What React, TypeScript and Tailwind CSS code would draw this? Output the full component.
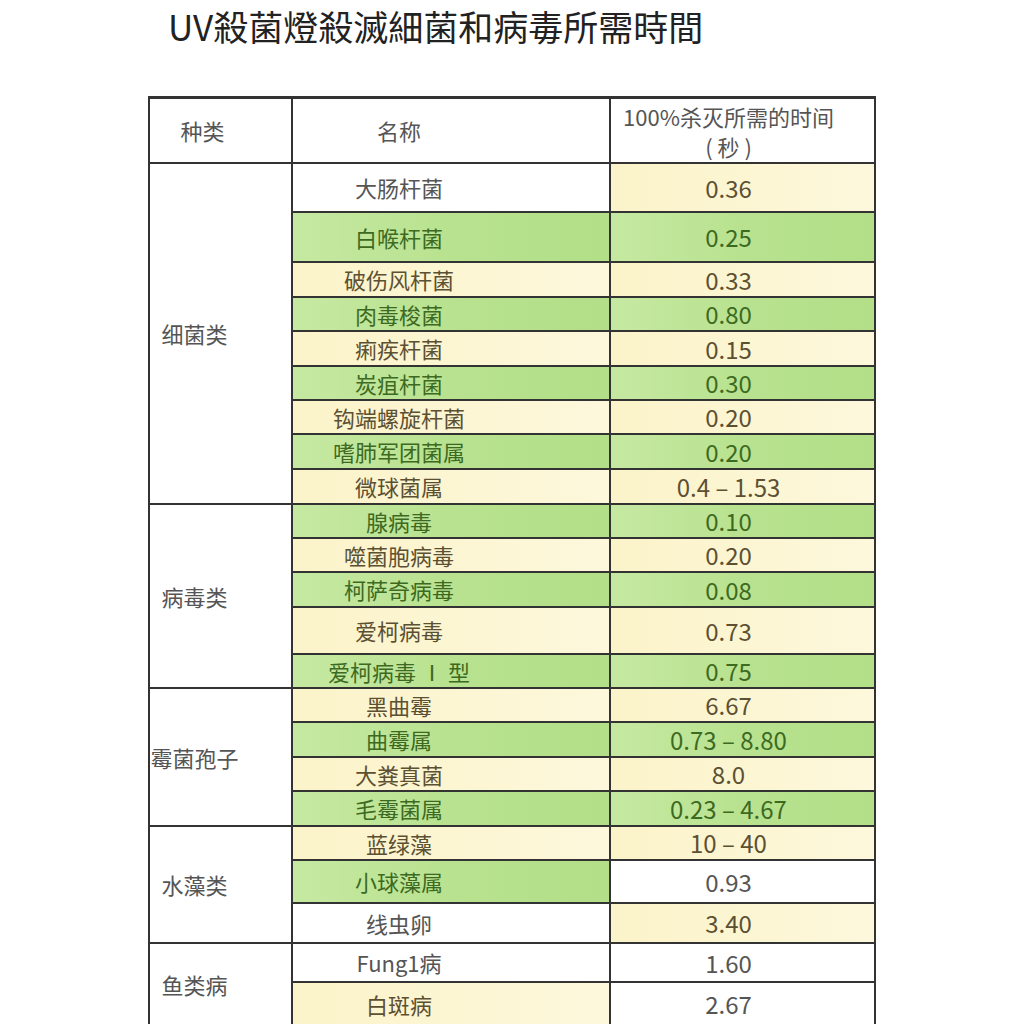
import React from 'react';

type Tone = 'w' | 'y' | 'g';

type Row = {
  name: string;
  time: string;
  h: string;
  nameTone: Tone;
  timeTone: Tone;
};

type Group = { label: string; rows: Row[] };

const TONE: Record<Tone, string> = {
  w: 'bg-white text-[#555]',
  y: 'bg-gradient-to-r from-[#fbf3c9] to-[#fdf8dc] text-[#5c5033]',
  g: 'bg-gradient-to-r from-[#c6e9a2] via-[#b8e28f] to-[#b3df88] text-[#3d6a22]',
};

const GROUPS: Group[] = [
  {
    label: '细菌类',
    rows: [
      { name: '大肠杆菌', time: '0.36', h: 'h-[47px]', nameTone: 'w', timeTone: 'y' },
      { name: '白喉杆菌', time: '0.25', h: 'h-[48px]', nameTone: 'g', timeTone: 'g' },
      { name: '破伤风杆菌', time: '0.33', h: 'h-[33px]', nameTone: 'y', timeTone: 'y' },
      { name: '肉毒梭菌', time: '0.80', h: 'h-[32px]', nameTone: 'g', timeTone: 'g' },
      { name: '痢疾杆菌', time: '0.15', h: 'h-[33px]', nameTone: 'y', timeTone: 'y' },
      { name: '炭疽杆菌', time: '0.30', h: 'h-[32px]', nameTone: 'g', timeTone: 'g' },
      { name: '钩端螺旋杆菌', time: '0.20', h: 'h-[32px]', nameTone: 'y', timeTone: 'y' },
      { name: '嗜肺军团菌属', time: '0.20', h: 'h-[33px]', nameTone: 'g', timeTone: 'g' },
      { name: '微球菌属', time: '0.4 – 1.53', h: 'h-[33px]', nameTone: 'y', timeTone: 'y' },
    ],
  },
  {
    label: '病毒类',
    rows: [
      { name: '腺病毒', time: '0.10', h: 'h-[32px]', nameTone: 'g', timeTone: 'g' },
      { name: '噬菌胞病毒', time: '0.20', h: 'h-[32px]', nameTone: 'y', timeTone: 'y' },
      { name: '柯萨奇病毒', time: '0.08', h: 'h-[33px]', nameTone: 'g', timeTone: 'g' },
      { name: '爱柯病毒', time: '0.73', h: 'h-[45px]', nameTone: 'y', timeTone: 'y' },
      { name: '爱柯病毒 Ⅰ 型', time: '0.75', h: 'h-[32px]', nameTone: 'g', timeTone: 'g' },
    ],
  },
  {
    label: '霉菌孢子',
    rows: [
      { name: '黑曲霉', time: '6.67', h: 'h-[32px]', nameTone: 'y', timeTone: 'y' },
      { name: '曲霉属', time: '0.73 – 8.80', h: 'h-[33px]', nameTone: 'g', timeTone: 'g' },
      { name: '大粪真菌', time: '8.0', h: 'h-[32px]', nameTone: 'y', timeTone: 'y' },
      { name: '毛霉菌属', time: '0.23 – 4.67', h: 'h-[33px]', nameTone: 'g', timeTone: 'g' },
    ],
  },
  {
    label: '水藻类',
    rows: [
      { name: '蓝绿藻', time: '10 – 40', h: 'h-[32px]', nameTone: 'y', timeTone: 'y' },
      { name: '小球藻属', time: '0.93', h: 'h-[41px]', nameTone: 'g', timeTone: 'w' },
      { name: '线虫卵', time: '3.40', h: 'h-[38px]', nameTone: 'w', timeTone: 'y' },
    ],
  },
  {
    label: '鱼类病',
    rows: [
      { name: 'Fung1病', time: '1.60', h: 'h-[37px]', nameTone: 'w', timeTone: 'w' },
      { name: '白斑病', time: '2.67', h: 'h-[42px]', nameTone: 'y', timeTone: 'w' },
    ],
  },
];

export default function App() {
  return (
    <div className="min-h-[1024px] w-[1024px] overflow-hidden bg-white font-['Noto_Sans_CJK_SC','Noto_Sans',sans-serif]">
      <h1 className="h-[54px] pl-[168px] text-[35px] leading-[52px] font-normal text-[#222] font-['Noto_Sans_CJK_TC','Noto_Sans',sans-serif]">
        UV殺菌燈殺滅細菌和病毒所需時間
      </h1>

      <div className="mt-[42px] ml-[148px] flex w-[728px] flex-col gap-[2px] bg-[#333] px-[2px] pt-[3px] text-[22px]">
        {/* header */}
        <div className="flex h-[63px] gap-[2px] text-[#555]">
          <div className="flex w-[141px] items-center justify-center bg-white pr-[36px]">种类</div>
          <div className="flex w-[316px] items-center justify-center bg-white pr-[104px]">名称</div>
          <div className="flex flex-1 flex-col items-center justify-center bg-white pr-[28px] leading-[30px]">
            <span>100%杀灭所需的时间</span>
            <span>( 秒 )</span>
          </div>
        </div>

        {GROUPS.map((group) => (
          <div key={group.label} className="flex gap-[2px]">
            <div className="flex w-[141px] items-center justify-center bg-white pr-[52px] text-[#555]">
              {group.label}
            </div>
            <div className="flex flex-1 flex-col gap-[2px]">
              {group.rows.map((row) => (
                <div key={row.name} className={`flex gap-[2px] ${row.h}`}>
                  <div
                    className={`flex w-[316px] items-center justify-center pr-[104px] ${TONE[row.nameTone]}`}
                  >
                    {row.name}
                  </div>
                  <div
                    className={`flex flex-1 items-center justify-center pr-[28px] text-[24px] ${TONE[row.timeTone]}`}
                  >
                    {row.time}
                  </div>
                </div>
              ))}
            </div>
          </div>
        ))}
      </div>
    </div>
  );
}
